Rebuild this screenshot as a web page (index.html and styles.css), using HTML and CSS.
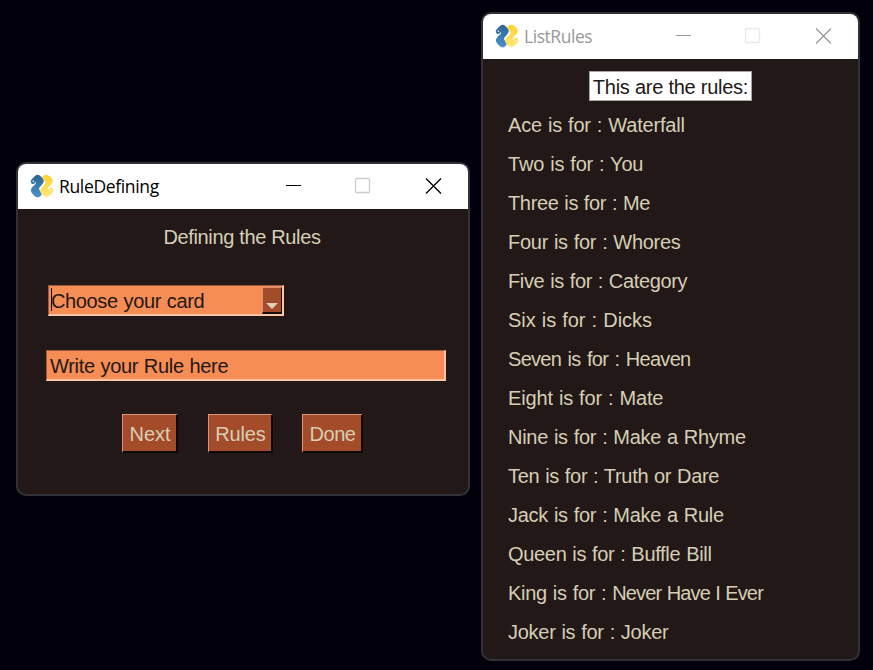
FILE: index.html
```html
<!DOCTYPE html>
<html lang="en">
<head>
<meta charset="utf-8">
<title>RuleDefining</title>
<link rel="stylesheet" href="styles.css">
</head>
<body>
<svg width="0" height="0" class="defs" aria-hidden="true">
  <defs>
    <linearGradient id="blue" x1="0" y1="0" x2="0" y2="1"><stop offset="0" stop-color="#2d6594"/><stop offset="1" stop-color="#4b92cb"/></linearGradient>
    <linearGradient id="gold" x1="0" y1="0" x2="0" y2="1"><stop offset="0" stop-color="#ffd133"/><stop offset="1" stop-color="#ffe779"/></linearGradient>
    <symbol id="logo" viewBox="0 0 24 24">
      <path fill="url(#blue)" d="M5 2Q8-.5 11 2.500L13.500 5.500Q14.300 8 12.500 10L9.500 13.500Q8.500 15 9.800 16.500L12 19.500Q11.500 22 8.500 23.300Q6 23.800 3.500 21L1.500 18.500Q0 15.800 2.200 13.200L5.200 10.300Q6.500 8.800 5.500 8Q4.800 9.800 2.800 10.200Q.5 9.500 .8 6.500Q2 4.500 5 2Z"/>
      <path fill="url(#gold)" d="M12 3Q14.500 .2 17.500 .9Q20 1.500 22.300 5Q23.500 7.800 21.500 10.200L18.300 13.300Q17.200 15 18.300 16Q18.800 14.200 21 13.600Q23.500 14 23.300 17.200Q22 19.800 19 22Q15.500 24.300 12.800 21.300L10.500 18.500Q9.600 16 11.500 13.800L15 10Q15.800 8.500 14.800 7Z"/>
      <circle cx="3.300" cy="7.300" r=".8" fill="#fff"/><circle cx="20.600" cy="16.700" r=".8" fill="#fff"/>
    </symbol>
    <symbol id="controls" viewBox="0 0 158 18">
      <path d="M1 8.500H16" fill="none" stroke="currentColor"/>
      <rect class="maximize" x="70.500" y="1.500" width="14" height="14" rx="1" fill="none"/>
      <path d="M141 1.500L156 16.500M156 1.500L141 16.500" fill="none" stroke="currentColor" stroke-width="1.300"/>
    </symbol>
  </defs>
</svg>
<main class="desktop">
  <section class="window define">
    <header class="titlebar"><svg class="logo"><use href="#logo"/></svg><h1>RuleDefining</h1><svg class="controls"><use href="#controls"/></svg></header>
    <div class="form">
      <p class="heading">Defining the Rules</p>
      <div class="combo"><span class="caret"></span><span class="value">Choose your card</span><span class="arrow"></span></div>
      <div class="entry">Write your Rule here</div>
      <div class="buttons"><button class="next">Next</button><button class="rules-button">Rules</button><button class="done">Done</button></div>
    </div>
  </section>
  <section class="window list inactive">
    <header class="titlebar"><svg class="logo"><use href="#logo"/></svg><h1>ListRules</h1><svg class="controls"><use href="#controls"/></svg></header>
    <div class="content">
      <p class="caption">This are the rules:</p>
      <ul>
        <li>Ace is for : Waterfall</li>
        <li>Two is for : You</li>
        <li>Three is for : Me</li>
        <li>Four is for : Whores</li>
        <li>Five is for : Category</li>
        <li>Six is for : Dicks</li>
        <li>Seven is for : Heaven</li>
        <li>Eight is for : Mate</li>
        <li>Nine is for : Make a Rhyme</li>
        <li>Ten is for : Truth or Dare</li>
        <li>Jack is for : Make a Rule</li>
        <li>Queen is for : Buffle Bill</li>
        <li>King is for : <span class="tight">Never Have I Ever</span></li>
        <li>Joker is for : Joker</li>
      </ul>
    </div>
  </section>
</main>
</body>
</html>
```
FILE: styles.css
```css
* { box-sizing: border-box; }
body { margin: 0; background: #02000c; font: 20px/30px "Liberation Sans", Arial, sans-serif; color: #d5cfb5; }
p, h1, ul { margin: 0; padding: 0; }
.defs { display: block; }
.desktop { width: 873px; height: 670px; overflow: hidden; display: flex; align-items: flex-start; padding: 12px 0 0 16px; }
.window { --maximize: #ccc; border: 2px solid #323137; border-radius: 10px; background: #221817; overflow: hidden; }
.define { width: 454px; height: 334px; margin-top: 150px; }
.list { width: 379px; height: 649px; margin-left: 11px; }
.titlebar { height: 45px; display: flex; align-items: center; background: #fff; color: #000; padding: 0 25px 0 12px; }
.logo { width: 24px; height: 24px; flex: none; margin-top: -2px; }
h1 { font: 400 17.5px/24px "Open Sans", sans-serif; letter-spacing: -.35px; margin: -2px 0 0 5px; }
.list h1 { letter-spacing: -.45px; }
.controls { width: 158px; height: 18px; margin-left: auto; margin-top: -1px; }
.maximize { stroke: var(--maximize); stroke-width: 1.3; }
.inactive { --maximize: #e9e9e9; }
.inactive .titlebar { color: #999; }
.form { padding: 13px 22px 0 28px; }
.heading { width: 392px; text-align: center; letter-spacing: -.35px; }
.combo { width: 236px; height: 31px; margin: 33px 0 0 2px; display: flex; align-items: stretch; background: #f68d55; color: #221817; border: 1px solid; border-width: 1px 2px 2px 1px; border-color: #9c583b #ffc3a5 #ffc3a5 #9c583b; line-height: 31px; }
.caret { width: 1px; background: #000; margin: 2px 0 3px 2px; }
.value { flex: 1; height: 28px; margin-left: -1px; letter-spacing: -.36px; word-spacing: .6px; }
.arrow { width: 20px; margin-top: 1px; background: #a44b29; border: 1px solid; border-width: 1px 1px 2px; border-color: #d9907c #160d0a #160d0a #d9907c; display: flex; align-items: flex-end; justify-content: center; padding-bottom: 3px; }
.arrow::after { content: ""; border: 6px solid transparent; border-top-color: #ded3b7; border-bottom: 0; }
.entry { width: 400px; height: 31px; margin-top: 34px; padding-left: 3px; background: #f68d55; color: #221817; border: 1px solid; border-width: 1px 2px 2px 1px; border-color: #9c583b #ffc3a5 #ffc3a5 #9c583b; line-height: 30px; letter-spacing: -.3px; word-spacing: .4px; }
.buttons { display: flex; margin: 33px 0 0 76px; }
button { height: 39px; padding: 2px 0 0 1px; font: inherit; color: #d5cfb5; background: #a44b29; border: 1px solid; border-width: 1px 2px 2px 1px; border-color: #dd947f #0d0706 #0d0706 #dd947f; }
.next { width: 56px; }
.rules-button { width: 65px; margin-left: 30px; letter-spacing: -.15px; }
.done { width: 61px; margin-left: 29px; letter-spacing: -.5px; }
.content { padding-top: 12px; }
.caption { width: 163px; height: 30px; margin-left: 106px; border: 1px solid #aaa5a5; background: #fff; color: #221817; text-align: center; white-space: nowrap; letter-spacing: -.25px; }
ul { list-style: none; margin: 5px 0 0 25px; }
li { height: 39px; line-height: 39px; letter-spacing: -.27px; word-spacing: .6px; }
li:nth-child(1), li:nth-child(2) { letter-spacing: -.17px; }
li:nth-child(3), li:nth-child(5) { letter-spacing: -.35px; }
li:nth-child(6) { letter-spacing: -.04px; }
li:nth-child(7) { letter-spacing: -.7px; word-spacing: 1.5px; }
li:nth-child(8) { letter-spacing: -.14px; }
li:nth-child(10), li:nth-child(12) { letter-spacing: -.31px; }
.tight { letter-spacing: -.85px; word-spacing: .6px; }
```
